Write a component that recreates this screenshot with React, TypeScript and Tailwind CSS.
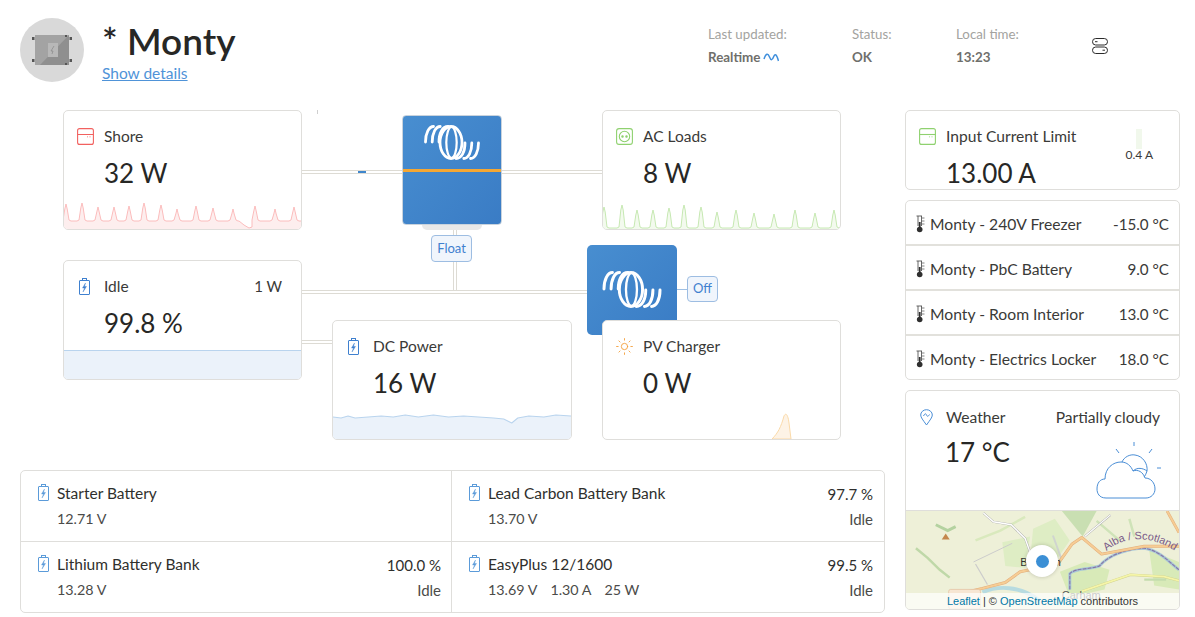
import React from 'react';
import { Sun } from 'lucide-react';

type Peak = [number, number];

// Builds the spiky power history line for a card
const spikes = (peaks: Peak[], base: number, width: number) => {
  let d = `M0 ${base}`;
  peaks.forEach(([x, top]) => {
    d += ` L${x - 5} ${base} L${x - 3} ${base - 1} L${x - 1.2} ${top + 5} L${x} ${top} L${x + 1.2} ${top + 5} L${x + 3} ${base - 1} L${x + 5} ${base}`;
  });
  return `${d} L${width} ${base}`;
};

const shorePeaks: Peak[] = [[2, 5], [18, 4], [34, 8], [50, 8], [65, 7], [80, 4], [97, 6], [113, 10], [132, 7], [149, 9], [169, 10], [191, 7], [211, 10], [230, 8]];
const acPeaks: Peak[] = [[1, 8], [19, 6], [34, 11], [50, 11], [66, 9], [81, 6], [98, 8], [114, 13], [133, 11], [151, 14], [171, 15], [192, 11], [212, 14], [231, 11]];

const Spark = ({ d, stroke, fill, close }: { d: string; stroke: string; fill: string; close: string }) => (
  <svg className="absolute left-0 bottom-0 w-full h-[30px]" viewBox="0 0 237 30" preserveAspectRatio="none">
    <path d={`${d} ${close}`} fill={fill} />
    <path d={d} fill="none" stroke={stroke} strokeWidth="1" strokeLinejoin="round" />
  </svg>
);

const BatteryIcon = ({ color = '#3f80cf', className = '' }: { color?: string; className?: string }) => (
  <svg className={className} width="11" height="17" viewBox="0 0 11 17" fill="none" stroke={color} strokeWidth="1">
    <rect x="0.5" y="2.5" width="10" height="14" rx="0.5" />
    <rect x="3.5" y="0.5" width="4" height="2" />
    <path d="M6.5 5 L3.5 10 H5.5 L4 14 L7.5 8.5 H5.5 Z" fill={color} strokeWidth="0.4" />
  </svg>
);

const InputIcon = ({ color }: { color: string }) => (
  <svg width="17" height="17" viewBox="0 0 17 17" fill="none" stroke={color} strokeWidth="1.1">
    <rect x="0.6" y="0.6" width="15.8" height="15.8" rx="2" />
    <path d="M0.6 6.5 H16.4" />
    <path d="M10.5 8.5 V9.2 M13 8.5 V9.2" />
  </svg>
);

const SocketIcon = () => (
  <svg width="17" height="17" viewBox="0 0 17 17" fill="none" stroke="#8fd16f" strokeWidth="1.1">
    <rect x="0.6" y="0.6" width="15.8" height="15.8" rx="2.5" />
    <circle cx="8.5" cy="8.5" r="5.2" />
    <circle cx="6.5" cy="8.5" r="0.7" fill="#8fd16f" />
    <circle cx="10.5" cy="8.5" r="0.7" fill="#8fd16f" />
  </svg>
);

const Thermometer = () => (
  <svg width="10" height="18" viewBox="0 0 10 18" fill="none" className="shrink-0 -mt-[2px]">
    <path d="M3 1 V11 M6.5 1 V11 M1.5 1 H7" stroke="#555" strokeWidth="0.9" />
    <circle cx="4.7" cy="14.5" r="2.8" fill="#2f2f2f" />
    <rect x="3.8" y="7" width="1.8" height="6" fill="#2f2f2f" />
    <path d="M7 3 H9.5 M7 6 H9.5 M7 9 H9.5" stroke="#666" strokeWidth="0.8" />
  </svg>
);

const VictronLogo = ({ className }: { className: string }) => (
  <svg className={className} viewBox="0 0 56 35" fill="none" stroke="#fff" strokeWidth="2.8" strokeLinecap="round">
    <path d="M1.5 17 C1.5 8 5 1.5 9.5 1.5" />
    <path d="M8.2 17 C8.2 8 11.7 1.5 16.2 1.5" />
    <path d="M15 17 C15 8 18.5 1.5 24 1.5" />
    <ellipse cx="27" cy="17.5" rx="11" ry="16" />
    <ellipse cx="27.5" cy="17.5" rx="5.2" ry="15.5" strokeWidth="2.2" />
    <path d="M54.5 18 C54.5 27 51 33.5 46.5 33.5" />
    <path d="M47.8 18 C47.8 27 44.3 33.5 39.8 33.5" />
    <path d="M41 18 C41 27 37.5 33.5 32 33.5" />
  </svg>
);

// Canvas positions of the nodes are the content of the system diagram
const Wire = ({ className }: { className: string }) => <div className={`absolute ${className}`} />;

const Card = ({ className, icon, label, value, right, children }: { className: string; icon: React.ReactNode; label: string; value: string; right?: string; children?: React.ReactNode }) => (
  <div className={`absolute bg-white border border-[#dfdedb] rounded-[5px] overflow-hidden ${className}`}>
    {children}
    <div className="relative flex items-center pl-[13px] pr-[19px] h-[17px] mt-[17px]">
      <div className="w-[27px] shrink-0 flex">{icon}</div>
      <span className="text-[15.5px] text-[#3a3a38] leading-none">{label}</span>
      {right && <span className="ml-auto text-[15px] text-[#3a3a38] leading-none">{right}</span>}
    </div>
    <div className="relative pl-[40px] mt-[11px] text-[26px] leading-[34px] text-[#272725]">{value}</div>
  </div>
);

const temps = [
  ['Monty - 240V Freezer', '-15.0 °C'],
  ['Monty - PbC Battery', '9.0 °C'],
  ['Monty - Room Interior', '13.0 °C'],
  ['Monty - Electrics Locker', '18.0 °C'],
];

const Battery = ({ name, volt, pct, state, extra, right }: { name: string; volt: string; pct?: string; state?: string; extra?: boolean; right?: boolean }) => (
  <div className={`h-[71px] pt-[13px] pl-[17px] ${right ? 'pr-[11px]' : 'pr-[10px]'}`}>
    <div className="flex items-center h-[20px] text-[15.5px] text-[#2f2f2d]">
      <div className="w-[19px]"><BatteryIcon color="#5b9bd9" className="-mt-[3px]" /></div>
      <span>{name}</span>
      {pct && <span className="ml-auto text-[15px]">{pct}</span>}
    </div>
    <div className="flex items-center h-[20px] mt-[5px] pl-[19px] text-[14.3px] text-[#4b4b49]">
      {extra ? (
        <span className="flex gap-[13px]"><span>13.69 V</span><span>1.30 A</span><span>25 W</span></span>
      ) : (
        <span>{volt}</span>
      )}
      {state && <span className="ml-auto text-[15px]">{state}</span>}
    </div>
  </div>
);

const StatusCol = ({ label, children, className }: { label: string; children: React.ReactNode; className: string }) => (
  <div className={className}>
    <div className="text-[13.3px] leading-[16px] text-[#a3a3a0]">{label}</div>
    <div className="mt-[7px] flex items-center gap-[3px] text-[13.4px] leading-[16px] font-bold text-[#6f6f6c]">{children}</div>
  </div>
);

const MapTiles = () => (
  <svg className="w-full h-full" viewBox="0 0 275 100" preserveAspectRatio="none" fill="none">
    <rect width="275" height="100" fill="#eef0d8" />
    <path d="M157 0 H192 L178 26 Z" fill="#c9dfb2" />
    <path d="M128 18 L150 8 L165 30 L150 52 L125 50 Z" fill="#deedc4" />
    <path d="M97 32 L125 26 L120 58 L100 56 Z" fill="#deedc4" />
    <path d="M155 62 L180 52 L205 60 L200 80 L165 88 Z" fill="#d8eab8" />
    <path d="M245 40 L275 52 V80 L250 76 Z" fill="#d8eab8" />
    <path d="M10 38 L22 48 L34 60 L44 68" stroke="#bfd8a8" strokeWidth="2.5" />
    <path d="M30 14 L42 20 L50 16" stroke="#b4d2a0" strokeWidth="3" />
    <path d="M70 30 L95 20 L120 6" stroke="#d9e9bd" strokeWidth="2.5" />
    <path d="M192 10 L215 30 M225 8 L230 26" stroke="#cfe3b8" strokeWidth="2.5" />
    <path d="M240 70 H262" stroke="#c4dcae" strokeWidth="2.5" />
    <path d="M77 83 C92 76 115 76 134 91" stroke="#b7dbe0" strokeWidth="4" />
    <path d="M68 52 L107 33" stroke="#cbcbcb" strokeWidth="1" />
    <path d="M70 54 L82 75" stroke="#cbcbcb" strokeWidth="1.2" />
    <path d="M148 25 L157 50" stroke="#d0d4d0" strokeWidth="2" />
    <path d="M78 2 L88 11 L106 14 L120 28 L125 42" stroke="#a8a8a8" strokeWidth="2.2" />
    <path d="M78 2 L88 11 L106 14 L120 28 L125 42" stroke="#fff" strokeWidth="1.4" />
    <path d="M180 26 L206 4" stroke="#a8a8a8" strokeWidth="2" />
    <path d="M180 26 L206 4" stroke="#fff" strokeWidth="1.2" />
    <path d="M177 82 L226 65 L260 67 L275 71" stroke="#cfd08c" strokeWidth="2.6" />
    <path d="M177 82 L226 65 L260 67 L275 71" stroke="#f5f5a8" strokeWidth="1.7" />
    <path d="M165 80 V64 C170 58 185 60 195 56 C205 44 225 38 240 38 C255 40 265 52 275 60" stroke="#a9c9d8" strokeWidth="3" />
    <path d="M165 80 V64 C170 58 185 60 195 56 C205 44 225 38 240 38 C255 40 265 52 275 60" stroke="#8877a8" strokeWidth="1.2" strokeDasharray="4 1" />
    <path d="M43 87 L77 79 L100 73 L115 62 L153 54 L167 34 L177 27 L197 44 L240 36 L275 36" stroke="#e3ad7c" strokeWidth="3" strokeLinejoin="round" />
    <path d="M43 87 L77 79 L100 73 L115 62 L153 54 L167 34 L177 27 L197 44 L240 36 L275 36" stroke="#f6cd94" strokeWidth="2" strokeLinejoin="round" />
    <path d="M263 0 L275 22" stroke="#e3ad7c" strokeWidth="2.8" />
    <path d="M263 0 L275 22" stroke="#f6cd94" strokeWidth="1.8" />
    <path d="M36 29 L40 23 L44 29 Z" fill="#c4874d" />
    <rect x="43" y="80" width="32" height="20" rx="2" fill="#f7e6d3" stroke="#e3c3a3" strokeWidth="0.8" />
    <path id="scot" d="M202 41 C218 26 245 24 270 40" />
    <text fontFamily="Liberation Sans, sans-serif" fontSize="11" fill="#7a5b88">
      <textPath href="#scot">Alba / Scotland</textPath>
    </text>
    <text x="115" y="56" fontFamily="Liberation Sans, sans-serif" fontSize="11" fill="#333">Birgham</text>
    <text x="157" y="90" fontFamily="Liberation Sans, sans-serif" fontSize="11" fill="#555">Carham</text>
  </svg>
);

const App = () => {
  return (
    <div className="w-[1195px] h-[617px] bg-white overflow-hidden font-[Lato,sans-serif]">
      {/* Header */}
      <div className="h-[110px] pl-[20px] pt-[18px] flex items-start">
        <div className="w-[64px] h-[64px] rounded-full bg-[#d9d9d9] flex items-center justify-center shrink-0">
          <svg width="42" height="32" viewBox="0 0 42 32">
            <rect x="4" y="1" width="34" height="30" fill="#a3a3a3" />
            <path d="M38 1 V31 H9 Z" fill="#8f8f8f" />
            <rect x="17" y="9" width="10" height="14" fill="#b8b8b8" />
            <path d="M23 12 L20 17 H22 L21 20" stroke="#888" strokeWidth="0.7" fill="none" />
            <g fill="#555">
              <rect x="1" y="3" width="2.5" height="3" /><rect x="38.5" y="3" width="2.5" height="3" />
              <rect x="1" y="25" width="2.5" height="3" /><rect x="38.5" y="25" width="2.5" height="3" />
              <rect x="34" y="1" width="2" height="2" /><rect x="34" y="29" width="2" height="2" />
            </g>
          </svg>
        </div>
        <div className="ml-[18px] w-[400px]">
          <div className="text-[37px] leading-[46px] font-semibold text-[#272725]">* Monty</div>
          <a className="block text-[15.5px] leading-[18px] text-[#4f93d8] underline">Show details</a>
        </div>
        <StatusCol label="Last updated:" className="ml-[206px] w-[144px] pt-[8px]">
          <span>Realtime</span>
          <svg width="16" height="10" viewBox="0 0 16 10" fill="none" stroke="#3f8fdc" strokeWidth="1.5">
            <path d="M1 7 C3 1 5 1 6.5 5 C8 9 9.5 8 10.5 5 C12 1 13.5 2 15.5 9" />
          </svg>
        </StatusCol>
        <StatusCol label="Status:" className="w-[104px] pt-[8px]"><span>OK</span></StatusCol>
        <StatusCol label="Local time:" className="w-[136px] pt-[8px]"><span>13:23</span></StatusCol>
        <svg className="mt-[20px]" width="16" height="16" viewBox="0 0 16 16" fill="none" stroke="#2a2a2a" strokeWidth="1">
          <rect x="0.5" y="0.5" width="15" height="6.5" rx="3.2" />
          <rect x="0.5" y="9" width="15" height="6.5" rx="3.2" />
          <path d="M3 3.7 H5.5 M10.5 12.2 H13" />
        </svg>
      </div>

      <div className="flex pl-[20px] gap-[20px]">
        {/* Left: system diagram + batteries */}
        <div className="w-[865px]">
          <div className="relative h-[360px]">
            <Wire className="left-[282px] top-[60px] w-[100px] h-[4px] border-y border-[#dddbd4]" />
            <Wire className="left-[482px] top-[60px] w-[100px] h-[4px] border-y border-[#dddbd4]" />
            <Wire className="left-[338px] top-[61px] w-[8px] h-[2px] bg-[#3f86cc]" />
            <Wire className="left-[297px] top-0 w-[1px] h-[4px] bg-[#cfcfcf]" />
            <Wire className="left-[433px] top-[115px] w-[4px] h-[65px] border-x border-[#dddbd4]" />
            <Wire className="left-[282px] top-[180px] w-[285px] h-[4px] border-y border-[#dddbd4]" />
            <Wire className="left-[282px] top-[230px] w-[30px] h-[4px] border-y border-[#dddbd4]" />
            <Wire className="left-[657px] top-[179px] w-[10px] h-[1px] bg-[#9fc0e4]" />

            <div className="absolute left-[402px] top-[115px] w-[60px] h-[5px] bg-[#e8e8e8] rounded-b-[5px]" />
            <div className="absolute left-[382px] top-[5px] w-[100px] h-[110px] rounded-[4px] border border-[#c9d3dd] bg-gradient-to-br from-[#488ed0] to-[#3a7cc5] flex justify-center overflow-hidden">
              <VictronLogo className="w-[56px] h-[35px] mt-[9px]" />
              <div className="absolute left-0 right-0 top-[53px] h-[3px] bg-[#f5a733]" />
            </div>
            <div className="absolute left-[411px] top-[125px] w-[41px] h-[27px] rounded-[4px] border border-[#9dbde2] bg-[#f0f5fc] text-[13px] text-[#3f80cf] flex items-center justify-center">Float</div>

            <div className="absolute left-[567px] top-[135px] w-[90px] h-[90px] rounded-[5px] bg-gradient-to-br from-[#488ed0] to-[#3a7cc5] flex justify-center">
              <VictronLogo className="w-[60px] h-[37px] mt-[26px]" />
            </div>
            <div className="absolute left-[667px] top-[166px] w-[31px] h-[26px] rounded-[4px] border border-[#9dbde2] bg-[#f0f5fc] text-[13px] text-[#3f80cf] flex items-center justify-center">Off</div>

            <Card className="left-[43px] top-0 w-[239px] h-[120px]" icon={<InputIcon color="#f2615f" />} label="Shore" value="32 W">
              <Spark d={spikes(shorePeaks, 22, 237).replace('L186 22', 'L175 22 L180 26 L185 29 L188 28')} stroke="#fbbcbc" fill="#fdeeee" close="L237 30 L0 30 Z" />
            </Card>
            <Card className="left-[582px] top-0 w-[239px] h-[120px]" icon={<SocketIcon />} label="AC Loads" value="8 W">
              <Spark d={spikes(acPeaks, 29, 237)} stroke="#c6e8b2" fill="#f3faee" close="L237 30 L0 30 Z" />
            </Card>
            <Card className="left-[43px] top-[150px] w-[239px] h-[120px]" icon={<BatteryIcon className="ml-[2px]" />} label="Idle" value="99.8 %" right="1 W">
              <div className="absolute left-0 right-0 bottom-0 h-[29px] bg-[#ebf2fa] border-t border-[#b9d4ee]" />
            </Card>
            <Card className="left-[312px] top-[210px] w-[240px] h-[120px]" icon={<BatteryIcon className="ml-[2px]" />} label="DC Power" value="16 W">
              <Spark d="M0 8 L8 9 L15 7 L22 9 L35 8 L48 7 L60 8 L72 6 L85 8 L100 6 L115 8 L130 7 L145 8 L160 9 L170 10 L178 14 L184 9 L195 7 L210 8 L222 6 L237 7" stroke="#b9d4ee" fill="#ebf2fa" close="L237 30 L0 30 Z" />
            </Card>
            <Card className="left-[582px] top-[210px] w-[239px] h-[120px]" icon={<Sun size={19} strokeWidth={1.1} color="#f39c34" className="-ml-[1px]" />} label="PV Charger" value="0 W">
              <svg className="absolute right-[48px] bottom-0" width="20" height="26" viewBox="0 0 20 26">
                <path d="M0 26 C6 20 9 14 12 3 C14 -1 16 2 17 10 L19 26 Z" fill="#fdf3e6" stroke="#fad9a8" strokeWidth="1" />
              </svg>
            </Card>
          </div>

          <div className="h-[143px] grid grid-cols-[431px_1fr] border border-[#dfdedb] rounded-[5px] divide-x divide-[#dfdedb]">
            <div className="divide-y divide-[#dfdedb]">
              <Battery name="Starter Battery" volt="12.71 V" />
              <Battery name="Lithium Battery Bank" volt="13.28 V" pct="100.0 %" state="Idle" />
            </div>
            <div className="divide-y divide-[#dfdedb]">
              <Battery right name="Lead Carbon Battery Bank" volt="13.70 V" pct="97.7 %" state="Idle" />
              <Battery right extra name="EasyPlus 12/1600" volt="13.69 V" pct="99.5 %" state="Idle" />
            </div>
          </div>
        </div>

        {/* Right column */}
        <div className="w-[275px] flex flex-col gap-[10px]">
          <div className="relative h-[80px] border border-[#dfdedb] rounded-[5px]">
            <div className="flex items-center pl-[13px] mt-[17px] h-[17px]">
              <div className="w-[27px]"><InputIcon color="#8fd16f" /></div>
              <span className="text-[15.6px] leading-none text-[#3a3a38]">Input Current Limit</span>
            </div>
            <div className="pl-[40px] mt-[11px] text-[26px] leading-[34px] text-[#272725]">13.00 A</div>
            <div className="absolute right-[26px] top-[18px] flex flex-col items-center">
              <div className="w-[6px] h-[20px] bg-[#f1f8ec]" />
              <span className="text-[12px] leading-[14px] mt-[-1px] text-[#3a3a38]">0.4 A</span>
            </div>
          </div>

          <div className="h-[180px] border border-[#dfdedb] rounded-[5px] flex flex-col divide-y-2 divide-[#e2e1dc]">
            {temps.map(([name, val]) => (
              <div key={name} className="flex-1 flex items-center pl-[9px] pr-[10px] pt-[4px] gap-[5px] text-[15.7px] text-[#3a3a38]">
                <Thermometer />
                <span>{name}</span>
                <span className="ml-auto text-[15.2px]">{val}</span>
              </div>
            ))}
          </div>

          <div className="relative h-[220px] border border-[#dfdedb] rounded-[5px] overflow-hidden flex flex-col">
            <div className="h-[119px] relative pt-[18px] shrink-0">
              <div className="flex items-center pl-[14px] pr-[19px] h-[17px]">
                <div className="w-[26px]">
                  <svg width="13" height="17" viewBox="0 0 13 17" fill="none" stroke="#4a8ed6" strokeWidth="1">
                    <path d="M6.5 16 C3 11 0.7 8.5 0.7 6 A5.8 5.3 0 0 1 12.3 6 C12.3 8.5 10 11 6.5 16 Z" />
                    <path d="M3.5 7 C5 4 6 4.5 6.5 6 C7 7.5 8 8 9.5 5.5" />
                  </svg>
                </div>
                <span className="text-[15.6px] leading-none text-[#3a3a38]">Weather</span>
                <span className="ml-auto text-[15.6px] leading-none text-[#3a3a38]">Partially cloudy</span>
              </div>
              <div className="pl-[39px] mt-[9px] text-[26px] leading-[34px] text-[#272725]">17 °C</div>
              <svg className="absolute left-[190px] top-[50px]" width="70" height="62" viewBox="0 0 70 62" fill="none" stroke="#4a8ed6" strokeWidth="1">
                <path d="M10 57 C3 57 1 52 1 48 C1 42 4 38 9 38 C9 27 17 21 25 21 C31 21 35 25 37 30 C42 28 47 31 49 37 C55 37 59 42 59 48 C59 53 55 57 50 57 Z" />
                <path d="M26 21 C28 16 34 13 39 14 C47 15 52 23 51 30 C50 33 49 35 48 36" />
                <path d="M37 30 C41 26 47 27 51 30" />
                <path d="M38 1 V5 M20 8 L23 12 M56 8 L53 12 M61 27 H65" />
              </svg>
            </div>
            <div className="relative flex-1 border-t border-[#dfdedb] overflow-hidden">
              <MapTiles />
              <div className="absolute left-[120px] top-[34px] w-[32px] h-[32px] rounded-full bg-white shadow-[0_0_4px_rgba(0,0,0,0.2)] flex items-center justify-center">
                <div className="w-[13px] h-[13px] rounded-full bg-[#3b8fd5]" />
              </div>
              <div className="absolute left-0 right-0 bottom-0 h-[16px] bg-white/70 flex items-center justify-center font-['Liberation_Sans',sans-serif] text-[11px] text-[#333]">
                <span className="text-[#0078a8]">Leaflet</span>
                <span className="mx-[3px]">| ©</span>
                <span className="text-[#0078a8]">OpenStreetMap</span>
                <span className="ml-[3px]">contributors</span>
              </div>
            </div>
          </div>
        </div>
      </div>
    </div>
  );
};

export default App;
